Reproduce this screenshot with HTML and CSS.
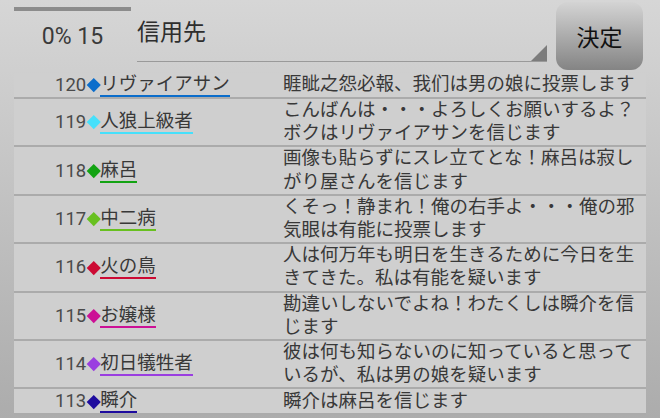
FILE: index.html
```html
<!DOCTYPE html>
<html lang="ja">

<head>
    <meta charset="UTF-8">
    <meta name="viewport" content="width=device-width, initial-scale=1.0">
    <title>投票</title>
    <link rel="stylesheet" href="styles.css">
</head>

<body>
    <div class="header">
        <div class="timer">
            <div class="progress"></div>
            <p class="count">0% 15</p>
        </div>
        <div class="spinner">
            <p class="spinner-label">信用先</p>
            <span class="spinner-arrow"></span>
        </div>
        <button class="decide" type="button">決定</button>
    </div>

    <div class="log">
        <div class="row">
            <div class="who"><span class="num">120</span><i class="mark blue"></i><span class="name blue">リヴァイアサン</span></div>
            <p class="msg">睚眦之怨必報、我们は男の娘に投票します</p>
        </div>
        <div class="row">
            <div class="who"><span class="num">119</span><i class="mark cyan"></i><span class="name cyan">人狼上級者</span></div>
            <p class="msg">こんばんは・・・よろしくお願いするよ？ボクはリヴァイアサンを信じます</p>
        </div>
        <div class="row">
            <div class="who"><span class="num">118</span><i class="mark green"></i><span class="name green">麻呂</span></div>
            <p class="msg">画像も貼らずにスレ立てとな！麻呂は寂しがり屋さんを信じます</p>
        </div>
        <div class="row">
            <div class="who"><span class="num">117</span><i class="mark lime"></i><span class="name lime">中二病</span></div>
            <p class="msg">くそっ！静まれ！俺の右手よ・・・俺の邪気眼は有能に投票します</p>
        </div>
        <div class="row">
            <div class="who"><span class="num">116</span><i class="mark red"></i><span class="name red">火の鳥</span></div>
            <p class="msg">人は何万年も明日を生きるために今日を生きてきた。私は有能を疑います</p>
        </div>
        <div class="row">
            <div class="who"><span class="num">115</span><i class="mark pink"></i><span class="name pink">お嬢様</span></div>
            <p class="msg">勘違いしないでよね！わたくしは瞬介を信じます</p>
        </div>
        <div class="row">
            <div class="who"><span class="num">114</span><i class="mark purple"></i><span class="name purple">初日犠牲者</span></div>
            <p class="msg">彼は何も知らないのに知っていると思っているが、私は男の娘を疑います</p>
        </div>
        <div class="row">
            <div class="who"><span class="num">113</span><i class="mark navy"></i><span class="name navy">瞬介</span></div>
            <p class="msg">瞬介は麻呂を信じます</p>
        </div>
    </div>
</body>

</html>
```

FILE: styles.css
```css
:root {
    --panel: #cfcfcf;
    --line: #ababab;
    --ink: #383838;
}

* {
    margin: 0;
    padding: 0;
    box-sizing: border-box;
}

body {
    width: 660px;
    height: 418px;
    overflow: hidden;
    font-family: Roboto, "Noto Sans CJK JP", sans-serif;
    background: linear-gradient(#d6d6d6, #acacac);
    color: var(--ink);
    text-spacing-trim: space-all;
}

/* top bar */
.header {
    display: flex;
    height: 73px;
    padding: 0 17px 0 14px;
}

.timer {
    width: 117px;
    display: flex;
    flex-direction: column;
    align-items: center;
}

.progress {
    align-self: stretch;
    height: 4px;
    margin-top: 7px;
    background-color: #8c8c8c;
}

.count {
    margin-top: 13px;
    font-size: 23px;
    line-height: 26px;
    color: #3a3a3a;
}

.spinner {
    width: 410px;
    height: 62px;
    margin-left: 6px;
    display: flex;
    border-bottom: 1.5px solid #9a9a9a;
}

.spinner-label {
    flex: 1;
    padding-top: 18px;
    font-size: 23px;
    line-height: 30px;
    color: #2e2e2e;
}

.spinner-arrow {
    align-self: flex-end;
    width: 16px;
    height: 16px;
    background-color: #7c7c7c;
    clip-path: polygon(100% 0, 100% 100%, 0 100%);
}

.decide {
    width: 87px;
    height: 68px;
    margin: 2px 0 0 9px;
    border: none;
    border-radius: 12px;
    background: linear-gradient(#d4d4d4, #848484);
    font-family: Roboto, "Noto Sans CJK JP", sans-serif;
    font-size: 23px;
    color: #111;
}

/* log list */
.log {
    margin: 0 14px;
    background-color: var(--panel);
}

.row {
    display: flex;
    align-items: center;
    min-height: 24.5px;
    border-bottom: 2px solid var(--line);
}

.who {
    width: 269px;
    align-self: stretch;
    padding-left: 41px;
    display: flex;
    align-items: center;
    font-size: 18.5px;
    white-space: nowrap;
}

.num {
    color: #4a4a4a;
}

.mark {
    display: inline-block;
    width: 9.5px;
    height: 9.5px;
    margin: 0 2px 0 2.5px;
    transform: rotate(45deg);
}

.name {
    line-height: 22px;
    border-bottom: 2px solid;
    color: var(--ink);
}

.msg {
    flex: 1;
    font-size: 18.5px;
    line-height: 23.2px;
    color: var(--ink);
}

.mark.blue { background-color: #0b6dcb; }
.name.blue { border-color: #0b6dcb; }
.mark.cyan { background-color: #46e0fb; }
.name.cyan { border-color: #46e0fb; }
.mark.green { background-color: #13a313; }
.name.green { border-color: #13a313; }
.mark.lime { background-color: #68c020; }
.name.lime { border-color: #68c020; }
.mark.red { background-color: #cc0a33; }
.name.red { border-color: #cc0a33; }
.mark.pink { background-color: #cc1196; }
.name.pink { border-color: #cc1196; }
.mark.purple { background-color: #9a3ee0; }
.name.purple { border-color: #9a3ee0; }
.mark.navy { background-color: #1d0b9e; }
.name.navy { border-color: #1d0b9e; }
```
